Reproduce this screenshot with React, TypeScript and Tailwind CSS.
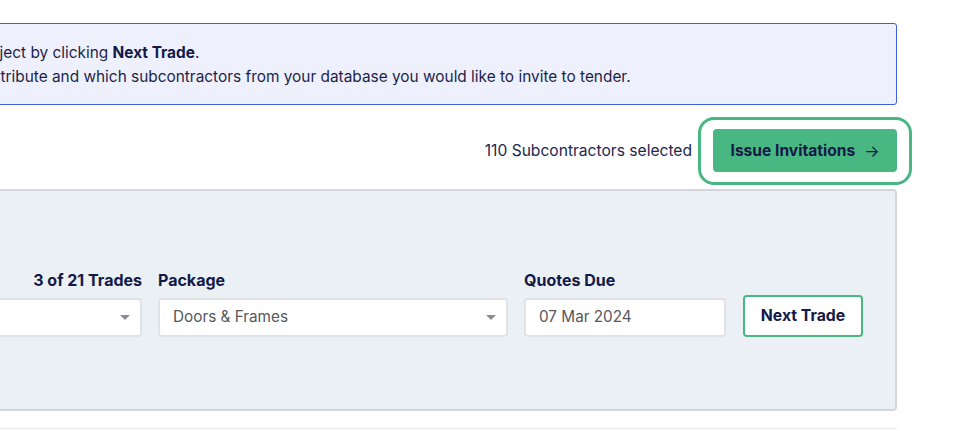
import React from 'react';

const Caret = () => (
    <svg width="10" height="5" viewBox="0 0 10 5" className="shrink-0">
        <path d="M0 0 L10 0 L5 5 Z" fill="#8a8d93" />
    </svg>
);

export default function App() {
    return (
        <div className="min-h-screen w-full bg-white overflow-hidden font-['Inter','Liberation_Sans',sans-serif] text-[#1c1f4a]">
            <div className="-ml-[403px] w-[1300px] pt-[23px]">
                {/* Info banner */}
                <div className="border border-[#3d5ce0] bg-[#eef1fd] rounded-[3px] pt-[17px] pb-[15px] text-[15.4px] leading-6 whitespace-nowrap">
                    <p className="pl-[107px]">
                        Go through each of the trades in this project by clicking <span className="font-bold text-[#141a47]">Next Trade</span>.
                    </p>
                    <p className="pl-[76px]">
                        For each trade, choose which package to distribute and which subcontractors from your database you would like to invite to tender.
                    </p>
                </div>

                {/* Selection summary */}
                <div className="flex items-center justify-end gap-[21px] pt-[24px] pb-[17px]">
                    <span className="text-[15.6px] text-[#24264d]">110 Subcontractors selected</span>
                    <div className="relative">
                        <button className="h-[43px] w-[184px] rounded-[4px] bg-[#48b782] text-[15.6px] font-bold text-[#141a47] flex items-center justify-center gap-[9px]">
                            Issue Invitations
                            <span className="font-normal text-[16px]">→</span>
                        </button>
                        <div className="pointer-events-none absolute -left-[15px] -right-[15px] -top-[12px] -bottom-[13px] rounded-[16px] border-[3px] border-[#48b782]" />
                    </div>
                </div>

                {/* Trade panel */}
                <div className="border-2 border-[#d3d7dc] bg-[#ebf0f5] rounded-[4px] pt-[79px] pb-[72px] pr-[32px] flex items-end justify-end gap-4">
                    <div className="flex flex-col w-[350px]">
                        <div className="flex justify-between mb-[8px] text-[16px] font-bold leading-5 text-[#141a47]">
                            <span>Trade</span>
                            <span>3 of 21 Trades</span>
                        </div>
                        <div className="h-[39px] bg-white border-2 border-[#dfe2e6] rounded-[4px] flex items-center justify-between pl-3 pr-[10px] text-[15.3px] text-[#55575c]">
                            <span>Joinery</span>
                            <Caret />
                        </div>
                    </div>
                    <div className="flex flex-col w-[350px]">
                        <div className="mb-[8px] text-[16px] font-bold leading-5 text-[#141a47]">Package</div>
                        <div className="h-[39px] bg-white border-2 border-[#dfe2e6] rounded-[4px] flex items-center justify-between pl-[13px] pr-[10px] text-[15.3px] text-[#55575c]">
                            <span>Doors &amp; Frames</span>
                            <Caret />
                        </div>
                    </div>
                    <div className="flex flex-col w-[202px]">
                        <div className="mb-[8px] text-[16px] font-bold leading-5 text-[#141a47]">Quotes Due</div>
                        <div className="h-[39px] bg-white border-2 border-[#dfe2e6] rounded-[4px] flex items-center pl-[13px] text-[15.3px] text-[#55575c]">
                            07 Mar 2024
                        </div>
                    </div>
                    <button className="ml-[1px] h-[42px] w-[120px] bg-white border-2 border-[#48b782] rounded-[4px] text-[15.8px] font-bold text-[#141a47]">
                        Next Trade
                    </button>
                </div>

                <div className="mt-[17px] border-t border-[#e6e8eb]" />
            </div>
        </div>
    );
}
